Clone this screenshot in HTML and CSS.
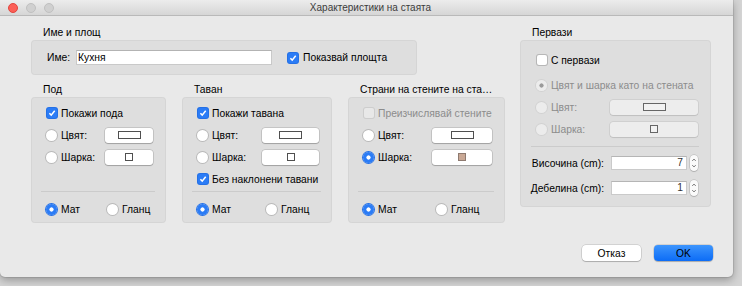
FILE: index.html
```html
<!DOCTYPE html>
<html lang="bg">
<head>
  <meta charset="UTF-8" />
  <title>Характеристики на стаята</title>
  <link rel="stylesheet" href="styles.css">
</head>
<body>
  <div class="window">
    <div class="titlebar">
      <div class="lights">
        <span class="light close"></span>
        <span class="light"></span>
        <span class="light"></span>
      </div>
      <div class="title">Характеристики на стаята</div>
      <div></div>
    </div>

    <div class="content">
      <div class="main-col">
        <section class="group">
          <h2>Име и площ</h2>
          <div class="box name-box">
            <span class="field-label">Име:</span>
            <div class="text-field">Кухня</div>
            <span class="check checked"><svg viewBox="0 0 10 10"><path d="M2.4 5.2 L4.2 7.1 L7.7 2.7"/></svg></span>
            <span>Показвай площта</span>
          </div>
        </section>

        <div class="surfaces">
          <section class="group surface floor">
            <h2>Под</h2>
            <div class="box">
              <div class="rows">
                <div class="row"><span class="check checked"><svg viewBox="0 0 10 10"><path d="M2.4 5.2 L4.2 7.1 L7.7 2.7"/></svg></span>Покажи пода</div>
                <div class="row"><span class="radio"></span>Цвят:<span class="swatch-btn"><i class="swatch-rect"></i></span></div>
                <div class="row"><span class="radio"></span>Шарка:<span class="swatch-btn"><i class="swatch-sq"></i></span></div>
              </div>
              <div class="finish">
                <div class="opt"><span class="radio on"></span>Мат</div>
                <div class="opt"><span class="radio"></span>Гланц</div>
              </div>
            </div>
          </section>

          <section class="group surface ceiling">
            <h2>Таван</h2>
            <div class="box">
              <div class="rows">
                <div class="row"><span class="check checked"><svg viewBox="0 0 10 10"><path d="M2.4 5.2 L4.2 7.1 L7.7 2.7"/></svg></span>Покажи тавана</div>
                <div class="row"><span class="radio"></span>Цвят:<span class="swatch-btn"><i class="swatch-rect"></i></span></div>
                <div class="row"><span class="radio"></span>Шарка:<span class="swatch-btn"><i class="swatch-sq"></i></span></div>
                <div class="row"><span class="check checked"><svg viewBox="0 0 10 10"><path d="M2.4 5.2 L4.2 7.1 L7.7 2.7"/></svg></span>Без наклонени тавани</div>
              </div>
              <div class="finish">
                <div class="opt"><span class="radio on"></span>Мат</div>
                <div class="opt"><span class="radio"></span>Гланц</div>
              </div>
            </div>
          </section>

          <section class="group surface walls">
            <h2>Страни на стените на ста…</h2>
            <div class="box">
              <div class="rows">
                <div class="row disabled"><span class="check"></span>Преизчислявай стените</div>
                <div class="row"><span class="radio"></span>Цвят:<span class="swatch-btn"><i class="swatch-rect"></i></span></div>
                <div class="row"><span class="radio on"></span>Шарка:<span class="swatch-btn"><i class="swatch-sq brown"></i></span></div>
              </div>
              <div class="finish">
                <div class="opt"><span class="radio on"></span>Мат</div>
                <div class="opt"><span class="radio"></span>Гланц</div>
              </div>
            </div>
          </section>
        </div>
      </div>

      <div class="side-col">
        <section class="group">
          <h2>Первази</h2>
          <div class="box side-box">
            <div class="row first"><span class="check"></span>С первази</div>
            <div class="row disabled second"><span class="radio on"></span>Цвят и шарка като на стената</div>
            <div class="row disabled"><span class="radio"></span>Цвят:<span class="swatch-btn"><i class="swatch-rect"></i></span></div>
            <div class="row disabled"><span class="radio"></span>Шарка:<span class="swatch-btn"><i class="swatch-sq"></i></span></div>
            <div class="sep"></div>
            <div class="num-row">
              <span class="num-label">Височина (cm):</span>
              <div class="num-field">7</div>
              <span class="stepper"><svg viewBox="0 0 8 16"><path d="M2.2 6 L4 4 L5.8 6 M2.2 10 L4 12 L5.8 10"/></svg></span>
            </div>
            <div class="num-row">
              <span class="num-label">Дебелина (cm):</span>
              <div class="num-field">1</div>
              <span class="stepper"><svg viewBox="0 0 8 16"><path d="M2.2 6 L4 4 L5.8 6 M2.2 10 L4 12 L5.8 10"/></svg></span>
            </div>
          </div>
        </section>
      </div>
    </div>

    <div class="footer">
      <button class="btn">Отказ</button>
      <button class="btn primary">OK</button>
    </div>
  </div>
</body>
</html>
```

FILE: styles.css
```css
* { box-sizing: border-box; margin: 0; padding: 0; }
body {
  width: 742px;
  height: 286px;
  overflow: hidden;
  background: #d4d4d4;
  font-family: 'Liberation Sans', Arial, sans-serif;
  font-size: 10.3px;
  color: #000;
}
.window {
  width: 733px;
  height: 277px;
  background: #e9e9e9;
  border-radius: 0 0 5px 5px;
  box-shadow: 0 3px 9px rgba(0, 0, 0, 0.3), 0 0 0 1px rgba(0, 0, 0, 0.08);
  display: flex;
  flex-direction: column;
}

/* title bar */
.titlebar {
  height: 16px;
  background: linear-gradient(#ececec, #d6d6d6);
  border-bottom: 1px solid #b9b9b9;
  display: grid;
  grid-template-columns: 1fr auto 1fr;
  align-items: center;
}
.lights { display: flex; gap: 8px; padding-left: 8px; }
.light {
  width: 10px;
  height: 10px;
  border-radius: 50%;
  background: #d0d0d0;
  border: 1px solid #c0c0c0;
}
.light.close { background: #fc5f57; border-color: #e2463f; }
.title { color: #3c3c3c; font-size: 10px; line-height: 15px; padding-left: 8px; }

/* layout */
.content {
  display: flex;
  gap: 15px;
  padding: 10px 0 0 31px;
}
.main-col { width: 474px; }
.side-col { width: 191px; }
.group h2 {
  font-size: 10.3px;
  font-weight: normal;
  color: #000;
  line-height: 14px;
  padding-left: 12px;
  white-space: nowrap;
}
.box {
  background: #dedede;
  border-radius: 4px;
  box-shadow: inset 0 0 0 1px rgba(0, 0, 0, 0.04);
}

/* name */
.name-box {
  width: 386px;
  height: 35px;
  display: flex;
  align-items: center;
  padding-left: 16px;
  white-space: nowrap;
}
.field-label { width: 29px; }
.text-field {
  width: 196px;
  height: 15px;
  background: #fff;
  border: 1px solid #c9c9c9;
  border-top-color: #b3b3b3;
  padding-left: 1px;
  line-height: 13px;
  color: #000;
}
.name-box .check { margin: 0 5px 0 16px; }

/* controls */
.check {
  width: 10px;
  height: 10px;
  flex: none;
  border-radius: 2px;
  background: #fff;
  box-shadow: 0 0 0 1px #b7b7b7;
  display: flex;
}
.check.checked { background: #2b7cf6; box-shadow: 0 0 0 1px #2470e6; }
.check svg { width: 10px; height: 10px; fill: none; stroke: #fff; stroke-width: 1.5; }
.radio {
  width: 11px;
  height: 11px;
  flex: none;
  border-radius: 50%;
  background: #fff;
  box-shadow: 0 0 0 1px #b9b9b9;
}
.radio.on { background: radial-gradient(circle, #fff 0 1.8px, #2b7cf6 2.4px); box-shadow: 0 0 0 1px #2470e6; }
.swatch-btn {
  margin-left: auto;
  flex: none;
  height: 15px;
  background: #fff;
  border-radius: 3px;
  box-shadow: 0 0 0 0.5px rgba(0, 0, 0, 0.22), 0 1px 1px rgba(0, 0, 0, 0.18);
  display: flex;
  align-items: center;
  justify-content: center;
}
.swatch-rect { width: 23px; height: 8px; border: 1.5px solid #4f4f4f; background: #fff; }
.swatch-sq { width: 8px; height: 8px; border: 1.5px solid #4f4f4f; background: #fff; }
.swatch-sq.brown { background: #c9a895; border: 1px solid #8e7a70; }

/* surfaces */
.surfaces { display: flex; gap: 16px; margin-top: 8px; }
.floor { --w: 135px; --btn: 48px; --split: 61px; }
.ceiling { --w: 150px; --btn: 57px; --split: 69px; }
.walls { --w: 157px; --btn: 60px; --split: 73px; }
.surface { width: var(--w); }
.surface .box { height: 126px; display: flex; flex-direction: column; }
.rows { height: 94px; padding-top: 5px; }
.row {
  height: 22px;
  display: flex;
  align-items: center;
  gap: 4px;
  padding: 0 13px 0 15px;
  white-space: nowrap;
}
.row .check { margin-left: 1px; }
.surface .swatch-btn { width: var(--btn); }
.row.disabled { color: #8c8c8c; }
.row.disabled .check { background: #e8e8e8; box-shadow: 0 0 0 1px #cdcdcd; }
.finish {
  flex: 1;
  margin: 0 11px 0 10px;
  border-top: 1px solid #cbcbcb;
  padding: 3px 0 0 5px;
  display: grid;
  grid-template-columns: var(--split) auto;
  align-items: center;
}
.opt { display: flex; align-items: center; gap: 4px; }

/* side panel */
.side-box { height: 167px; padding-top: 9px; }
.side-box .row { padding: 0 13px 0 16px; }
.side-box .row.second { margin-top: 3px; }
.side-box .row.first .check { margin-left: 1px; }
.side-box .swatch-btn { width: 88px; background: #ededed; box-shadow: 0 0 0 0.5px rgba(0, 0, 0, 0.12), 0 1px 1px rgba(0, 0, 0, 0.08); }
.side-box .swatch-rect, .side-box .swatch-sq { border-color: #666; background: #f2f2f2; }
.row.disabled .radio { background: #ececec; box-shadow: 0 0 0 1px #d2d2d2; }
.row.disabled .radio.on { background: radial-gradient(circle, #9b9b9b 0 1.8px, #ececec 2.4px); }
.sep { margin: 6px 12px 0 11px; border-top: 1px solid #cbcbcb; }
.num-row { height: 22px; display: flex; align-items: center; margin-top: 3px; }
.sep + .num-row { margin-top: 5px; }
.num-label { width: 84px; text-align: right; color: #000; white-space: nowrap; }
.num-field {
  margin-left: 7px;
  width: 76px;
  height: 14px;
  background: #fff;
  border: 1px solid #cacaca;
  border-top-color: #b5b5b5;
  text-align: right;
  padding-right: 3px;
  line-height: 12px;
  color: #333;
}
.stepper {
  margin-left: 3px;
  width: 8px;
  height: 16px;
  border-radius: 4px;
  background: #fafafa;
  box-shadow: 0 0 0 0.5px rgba(0, 0, 0, 0.2), 0 1px 1px rgba(0, 0, 0, 0.12);
  display: flex;
}
.stepper svg { width: 8px; height: 16px; fill: none; stroke: #777; stroke-width: 0.9; }

/* footer */
.footer {
  margin-top: auto;
  display: flex;
  justify-content: flex-end;
  gap: 13px;
  padding: 0 20px 16px 0;
}
.btn {
  width: 59px;
  height: 16px;
  border: none;
  border-radius: 4px;
  background: #fff;
  font-family: inherit;
  font-size: 10.3px;
  color: #000;
  box-shadow: 0 0 0 0.5px rgba(0, 0, 0, 0.2), 0 1px 1px rgba(0, 0, 0, 0.18);
}
.btn.primary { background: linear-gradient(#3d95fd, #0c6cf6); color: #000; }
```
